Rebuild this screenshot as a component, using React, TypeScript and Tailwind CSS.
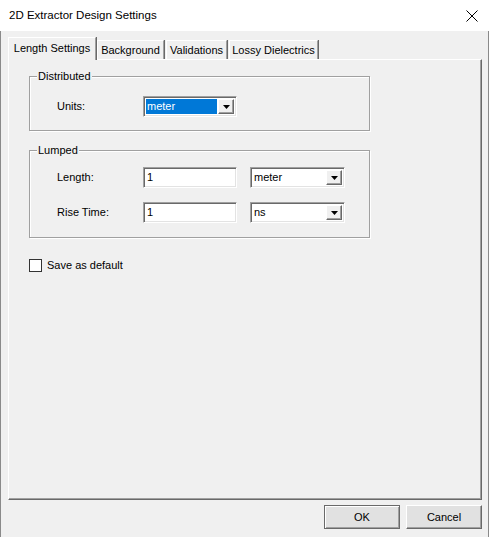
import React from "react";

const sunken =
  "border-t border-l border-[#a0a0a0] border-b border-r border-b-white border-r-white shadow-[inset_1px_1px_0_#696969,inset_-1px_-1px_0_#e3e3e3]";

function ArrowButton() {
  return (
    <div className="w-[16px] h-full bg-[#f0f0f0] border-t border-l border-white border-b border-r border-b-[#696969] border-r-[#696969] shadow-[inset_-1px_-1px_0_#a0a0a0] flex items-center justify-center">
      <svg width="7" height="4" viewBox="0 0 7 4">
        <path d="M0 0h7L3.5 4z" fill="#000" />
      </svg>
    </div>
  );
}

function Combo({ value, selected }: { value: string; selected?: boolean }) {
  return (
    <div className={`h-[21px] bg-white flex items-stretch p-[2px] ${sunken}`}>
      <div
        className={`flex-1 flex items-center pl-[1px] ${
          selected ? "bg-[#0078d7] text-white" : "text-black"
        }`}
      >
        {value}
      </div>
      <div className="pl-[1px]">
        <ArrowButton />
      </div>
    </div>
  );
}

function Edit({ value }: { value: string }) {
  return (
    <div className={`h-[21px] bg-white flex items-center pl-[3px] ${sunken}`}>
      {value}
    </div>
  );
}

function Group({
  label,
  className,
  children,
}: {
  label: string;
  className: string;
  children: React.ReactNode;
}) {
  return (
    <div
      className={`relative border border-[#a0a0a0] shadow-[inset_1px_1px_0_#ffffff,1px_1px_0_#ffffff] ${className}`}
    >
      <span className="absolute left-[7px] -top-[8px] bg-[#f0f0f0] px-[1px] leading-[14px]">
        {label}
      </span>
      {children}
    </div>
  );
}

export default function App() {
  const tabs = [
    { name: "Background", w: "w-[67px]" },
    { name: "Validations", w: "w-[61px]" },
    { name: "Lossy Dielectrics", w: "w-[89px]" },
  ];

  return (
    <div className="w-[489px] h-[537px] flex flex-col font-['Liberation_Sans',Arial,sans-serif] text-[11px] text-black">
      {/* title bar */}
      <div className="h-[31px] bg-white flex items-center justify-between pl-[9px] pr-[11px] shrink-0">
        <span className="text-[11.5px]">2D Extractor Design Settings</span>
        <svg width="12" height="12" viewBox="0 0 12 12">
          <path d="M0.5 0.5L11.5 11.5M11.5 0.5L0.5 11.5" stroke="#000" strokeWidth="1" />
        </svg>
      </div>

      {/* body */}
      <div className="flex-1 bg-[#f0f0f0] border-l border-r border-[#8a8a8a] pl-[7px] pr-[6px] flex flex-col">
        {/* tabs */}
        <div className="flex items-end pt-[6px] h-[28px] shrink-0">
          <div className="relative z-10 w-[88px] h-[23px] -mb-[1px] bg-[#f0f0f0] border-t border-l border-white border-r border-r-[#a0a0a0] shadow-[1px_0_0_#696969] flex items-center justify-center pb-[2px]">
            Length Settings
          </div>
          <div className="flex items-end gap-[2px] ml-[1px]">
            {tabs.map((t) => (
              <div
                key={t.name}
                className={`${t.w} h-[19px] border-t border-l border-white border-r border-r-[#a0a0a0] shadow-[1px_0_0_#696969] flex items-center justify-center pt-[1px]`}
              >
                {t.name}
              </div>
            ))}
          </div>
        </div>

        {/* panel */}
        <div className="h-[441px] border-t border-l border-white border-r border-b border-r-[#696969] border-b-[#696969] shadow-[inset_-1px_-1px_0_#a0a0a0] pl-[20px] pt-[16px] flex flex-col">
          <Group label="Distributed" className="w-[341px] h-[55px] pl-[27px] pt-[19px]">
            <div className="flex items-center">
              <span className="w-[86px]">Units:</span>
              <div className="w-[94px]">
                <Combo value="meter" selected />
              </div>
            </div>
          </Group>

          <Group label="Lumped" className="w-[341px] h-[88px] mt-[19px] pl-[27px] pt-[16px] flex flex-col gap-[14px]">
            <div className="flex items-center">
              <span className="w-[86px]">Length:</span>
              <div className="w-[94px]">
                <Edit value="1" />
              </div>
              <div className="w-[95px] ml-[13px]">
                <Combo value="meter" />
              </div>
            </div>
            <div className="flex items-center">
              <span className="w-[86px]">Rise Time:</span>
              <div className="w-[94px]">
                <Edit value="1" />
              </div>
              <div className="w-[95px] ml-[13px]">
                <Combo value="ns" />
              </div>
            </div>
          </Group>

          <div className="flex items-center mt-[19px]">
            <div className="w-[13px] h-[13px] bg-white border border-[#333]" />
            <span className="ml-[5px]">Save as default</span>
          </div>
        </div>

        {/* buttons */}
        <div className="flex justify-end gap-[6px] pt-[5px]">
          <button className="w-[76px] h-[24px] bg-[#e1e1e1] border border-[#696969] shadow-[inset_1px_1px_0_#ffffff,inset_-1px_-1px_0_#a0a0a0] flex items-center justify-center">
            OK
          </button>
          <button className="w-[76px] h-[24px] bg-[#e1e1e1] border-t border-l border-white border-b border-r border-b-[#696969] border-r-[#696969] shadow-[inset_-1px_-1px_0_#a0a0a0] flex items-center justify-center">
            Cancel
          </button>
        </div>
      </div>
    </div>
  );
}
